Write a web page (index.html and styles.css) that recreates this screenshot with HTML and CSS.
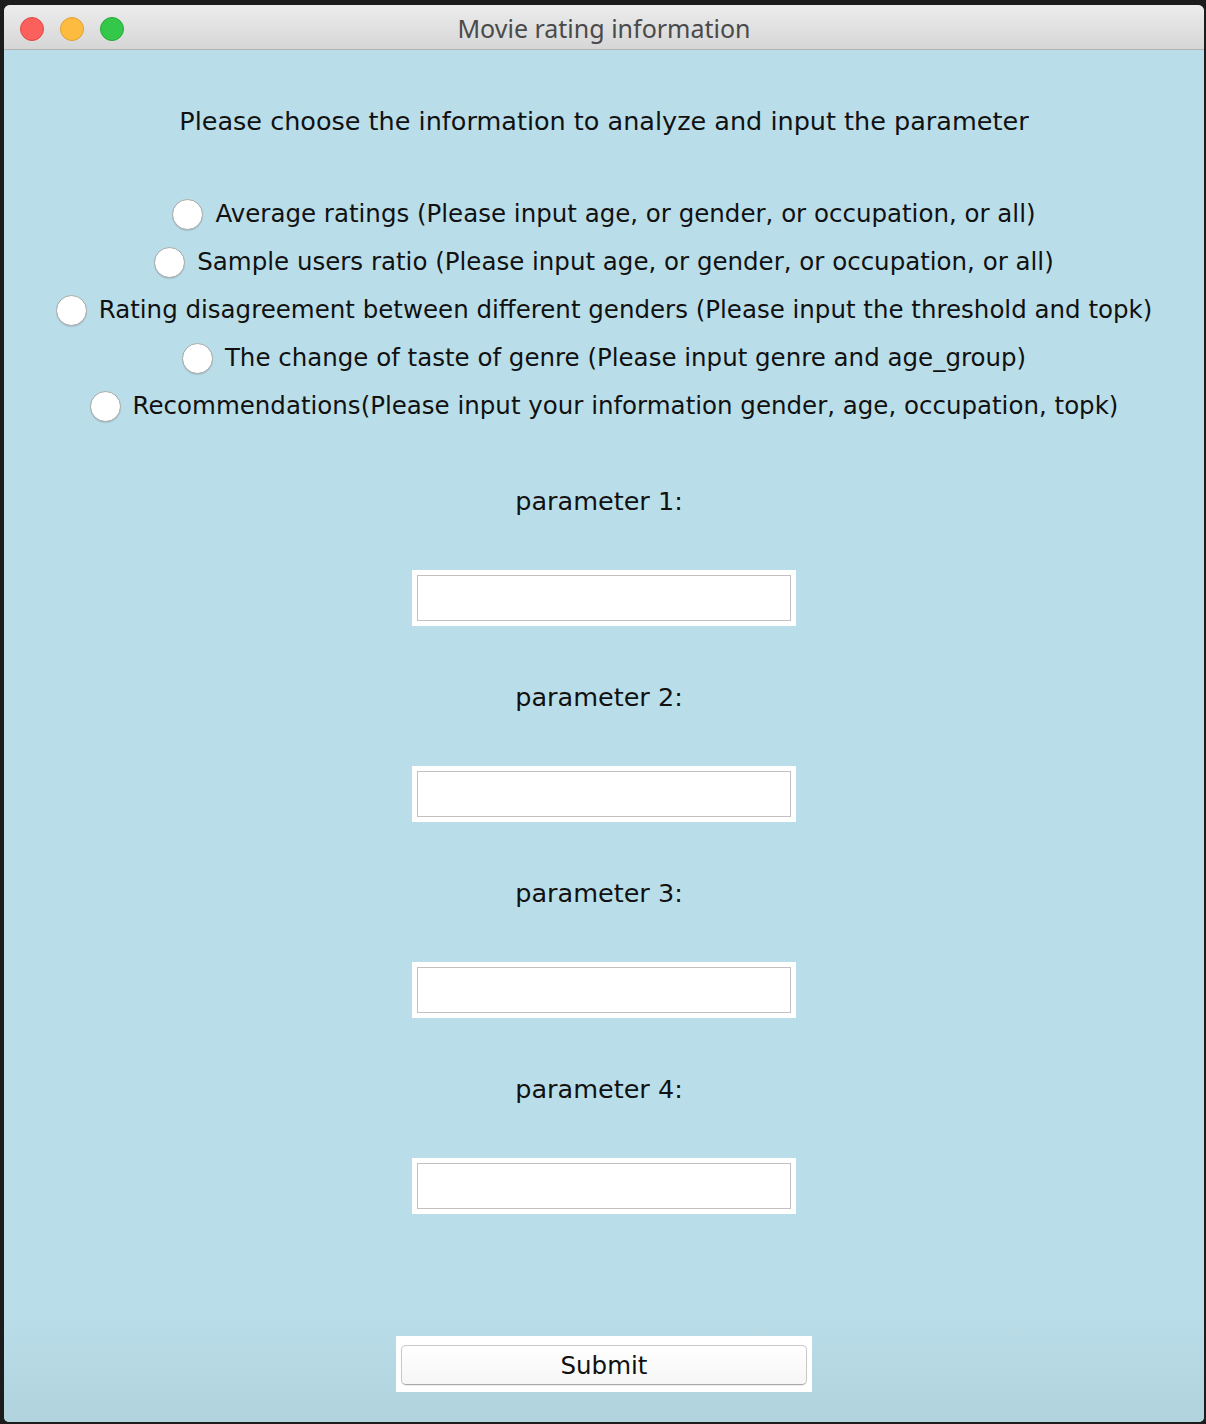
FILE: index.html
```html
<!DOCTYPE html>
<html>
<head>
<meta charset="utf-8">
<title>Movie rating information</title>
<link rel="stylesheet" href="styles.css">
</head>
<body>
<div class="window">
  <div class="titlebar">
    <div class="lights">
      <span class="light red"></span>
      <span class="light yellow"></span>
      <span class="light green"></span>
    </div>
    <div class="title">Movie rating information</div>
  </div>
  <div class="content">
    <div class="heading">Please choose the information to analyze and input the parameter</div>
    <div class="options">
      <label class="option"><span class="radio"></span><span class="opt-text">Average ratings (Please input age, or gender, or occupation, or all)</span></label>
      <label class="option"><span class="radio"></span><span class="opt-text">Sample users ratio (Please input age, or gender, or occupation, or all)</span></label>
      <label class="option"><span class="radio"></span><span class="opt-text">Rating disagreement between different genders (Please input the threshold and topk)</span></label>
      <label class="option"><span class="radio"></span><span class="opt-text">The change of taste of genre (Please input genre and age_group)</span></label>
      <label class="option"><span class="radio"></span><span class="opt-text">Recommendations(Please input your information gender, age, occupation, topk)</span></label>
    </div>
    <div class="params">
      <div class="param">
        <div class="param-label">parameter 1:</div>
        <div class="field-wrap"><div class="field"></div></div>
      </div>
      <div class="param">
        <div class="param-label">parameter 2:</div>
        <div class="field-wrap"><div class="field"></div></div>
      </div>
      <div class="param">
        <div class="param-label">parameter 3:</div>
        <div class="field-wrap"><div class="field"></div></div>
      </div>
      <div class="param">
        <div class="param-label">parameter 4:</div>
        <div class="field-wrap"><div class="field"></div></div>
      </div>
    </div>
    <div class="submit-wrap"><div class="submit">Submit</div></div>
  </div>
</div>
</body>
</html>
```

FILE: styles.css
```css
html, body {
  margin: 0;
  padding: 0;
}
body {
  background: #1c1c1c;
  width: 1206px;
  height: 1424px;
  overflow: hidden;
  padding-top: 5px;
  padding-left: 4px;
  box-sizing: border-box;
}
.window {
  width: 1200px;
  height: 1417px;
  border-radius: 6px 6px 5px 5px;
  overflow: hidden;
  display: flex;
  flex-direction: column;
  background: #badee9;
}
.titlebar {
  height: 44px;
  flex: none;
  border-bottom: 1px solid #b2b2b2;
  background: linear-gradient(to bottom, #ececec, #d6d6d6);
  display: flex;
  align-items: center;
  position: relative;
}
.lights {
  display: flex;
  gap: 16px;
  position: absolute;
  left: 16px;
  top: 12px;
}
.light {
  width: 24px;
  height: 24px;
  border-radius: 50%;
  box-sizing: border-box;
}
.red { background: #fc605c; border: 1px solid #de4a45; }
.yellow { background: #fdbc40; border: 1px solid #dea132; }
.green { background: #34c84a; border: 1px solid #27a83a; }
.title {
  flex: 1;
  text-align: center;
  font-family: "Noto Sans", sans-serif;
  font-size: 25px;
  color: #4a4a4a;
  line-height: 44px;
  padding-top: 2px;
}
.content {
  flex: 1;
  display: flex;
  flex-direction: column;
  align-items: center;
  padding-top: 47px;
  font-family: "DejaVu Sans", sans-serif;
  font-size: 24.5px;
  color: #111111;
  background: linear-gradient(to bottom, #badee9 0, #badee9 calc(100% - 110px), #b0d3de 100%);
}
.heading {
  line-height: 48px;
  height: 48px;
  font-size: 25.5px;
}
.options {
  margin-top: 45px;
  display: flex;
  flex-direction: column;
  align-items: center;
}
.option {
  height: 48px;
  display: flex;
  align-items: center;
  gap: 12px;
}
.radio {
  width: 31px;
  height: 31px;
  box-sizing: border-box;
  border-radius: 50%;
  background: #ffffff;
  border: 1px solid #a9a9a9;
  box-shadow: 0 1px 1px rgba(0,0,0,0.12);
}
.opt-text {
  line-height: 48px;
}
.params {
  margin-top: 47px;
  display: flex;
  flex-direction: column;
  gap: 47px;
  align-items: center;
}
.param {
  display: flex;
  flex-direction: column;
  align-items: center;
  gap: 45px;
}
.param-label {
  height: 48px;
  line-height: 48px;
  margin-right: 10px;
  font-size: 25.5px;
}
.field-wrap {
  width: 384px;
  height: 56px;
  background: #ffffff;
  padding: 5px;
  box-sizing: border-box;
}
.field {
  height: 100%;
  border: 1px solid #c2c2c2;
  box-sizing: border-box;
}
.submit-wrap {
  margin-top: 122px;
  width: 416px;
  height: 56px;
  background: #ffffff;
  padding: 9px 5px 7px 5px;
  box-sizing: border-box;
}
.submit {
  height: 40px;
  box-sizing: border-box;
  border: 1px solid #c8c8c8;
  border-bottom-color: #a8a8a8;
  border-radius: 5px;
  background: linear-gradient(to bottom, #ffffff, #f6f6f6);
  text-align: center;
  line-height: 40px;
  box-shadow: 0 1px 1px rgba(0,0,0,0.08);
}
```
